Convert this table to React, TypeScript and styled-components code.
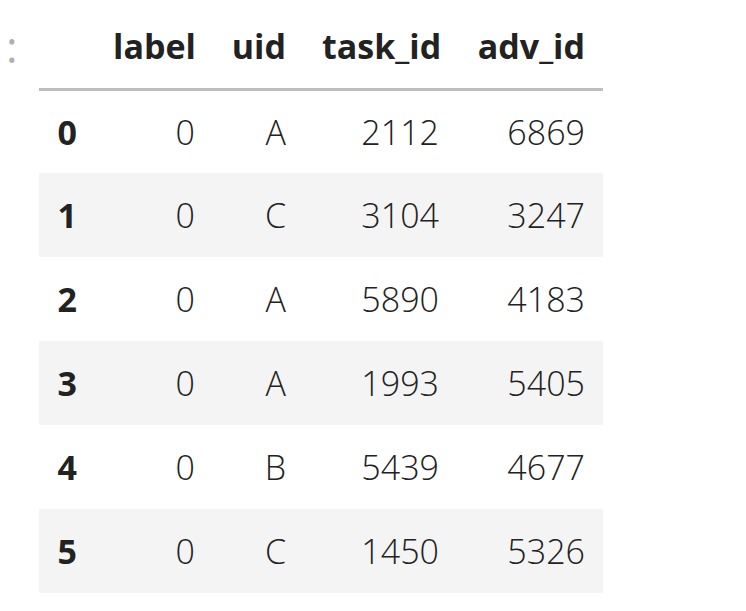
import React from "react";
import styled, { createGlobalStyle } from "styled-components";

const rows = [
  { idx: 0, label: 0, uid: "A", task: 2112, adv: 6869 },
  { idx: 1, label: 0, uid: "C", task: 3104, adv: 3247 },
  { idx: 2, label: 0, uid: "A", task: 5890, adv: 4183 },
  { idx: 3, label: 0, uid: "A", task: 1993, adv: 5405 },
  { idx: 4, label: 0, uid: "B", task: 5439, adv: 4677 },
  { idx: 5, label: 0, uid: "C", task: 1450, adv: 5326 },
];

const columns = [
  { key: "", width: 56 },
  { key: "label", width: 118 },
  { key: "uid", width: 91 },
  { key: "task_id", width: 153 },
  { key: "adv_id", width: 146 },
];

export default function App() {
  return (
    <>
      <GlobalStyle />
      <SOutputArea>
        <SPrompt>:</SPrompt>
        <STable>
          <colgroup>
            {columns.map((c) => (
              <col key={c.key} style={{ width: c.width }} />
            ))}
          </colgroup>
          <thead>
            <tr>
              {columns.map((c) => (
                <SHeadCell key={c.key}>{c.key}</SHeadCell>
              ))}
            </tr>
          </thead>
          <tbody>
            {rows.map((r) => (
              <SRow key={r.idx}>
                <SIndexCell>{r.idx}</SIndexCell>
                <SCell>{r.label}</SCell>
                <SCell>{r.uid}</SCell>
                <SCell>{r.task}</SCell>
                <SCell>{r.adv}</SCell>
              </SRow>
            ))}
          </tbody>
        </STable>
      </SOutputArea>
    </>
  );
}

const GlobalStyle = createGlobalStyle`
  body {
    margin: 0;
    background: #ffffff;
    font-family: "Open Sans", "Noto Sans", sans-serif;
  }
`;
const SOutputArea = styled.div`
  display: flex;
  align-items: flex-start;
  padding-top: 5px;
`;
const SPrompt = styled.div`
  width: 39px;
  box-sizing: border-box;
  padding: 19px 0 0 6px;
  font-size: 44px;
  line-height: 44px;
  color: #b0b0b0;
`;
const STable = styled.table`
  border-collapse: collapse;
  border-spacing: 0;
  table-layout: fixed;
  width: 564px;
  color: #222222;
  font-size: 34px;
`;
const SHeadCell = styled.th`
  height: 84px;
  padding: 0 18px;
  box-sizing: border-box;
  text-align: right;
  vertical-align: middle;
  font-weight: 700;
  border-bottom: 3px solid #bdbdbd;
  white-space: nowrap;
`;
const SRow = styled.tr`
  &:nth-child(odd) {
    background: #ffffff;
  }
  &:nth-child(even) {
    background: #f4f4f4;
  }
`;
const SCell = styled.td`
  height: 84px;
  padding: 0 18px;
  box-sizing: border-box;
  text-align: right;
  vertical-align: middle;
  font-weight: 300;
  white-space: nowrap;
`;
const SIndexCell = styled.th`
  height: 84px;
  padding: 0 18px;
  box-sizing: border-box;
  text-align: right;
  vertical-align: middle;
  font-weight: 700;
`;
